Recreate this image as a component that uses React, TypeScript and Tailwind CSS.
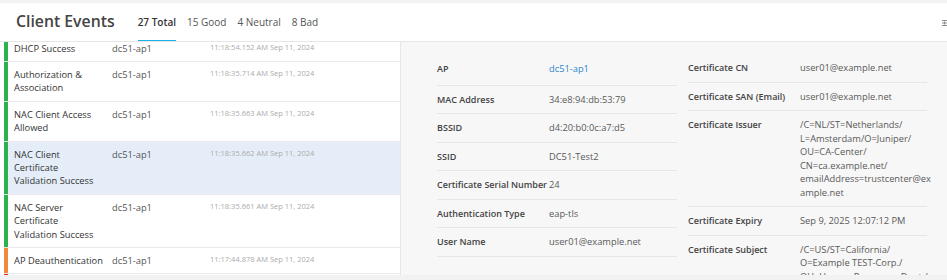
import React from "react";

type Ev = {
  name: string[];
  ap: string;
  time: string;
  color: string;
  selected?: boolean;
  first?: boolean;
};

const events: Ev[] = [
  { name: ["DHCP Success"], ap: "dc51-ap1", time: "11:18:54.152 AM Sep 11, 2024", color: "bg-[#2bb24c]", first: true },
  { name: ["Authorization &", "Association"], ap: "dc51-ap1", time: "11:18:35.714 AM Sep 11, 2024", color: "bg-[#2bb24c]" },
  { name: ["NAC Client Access", "Allowed"], ap: "dc51-ap1", time: "11:18:35.663 AM Sep 11, 2024", color: "bg-[#2bb24c]" },
  { name: ["NAC Client", "Certificate", "Validation Success"], ap: "dc51-ap1", time: "11:18:35.662 AM Sep 11, 2024", color: "bg-[#2bb24c]", selected: true },
  { name: ["NAC Server", "Certificate", "Validation Success"], ap: "dc51-ap1", time: "11:18:35.661 AM Sep 11, 2024", color: "bg-[#2bb24c]" },
  { name: ["AP Deauthentication"], ap: "dc51-ap1", time: "11:17:44.878 AM Sep 11, 2024", color: "bg-[#ef8a3c]" },
  { name: ["Deauthenticated"], ap: "dc51-ap1", time: "11:17:44.870 AM Sep 11, 2024", color: "bg-[#d62b32]" },
];

const leftDetails: { label: string; value: string[]; link?: boolean }[] = [
  { label: "AP", value: ["dc51-ap1"], link: true },
  { label: "MAC Address", value: ["34:e8:94:db:53:79"] },
  { label: "BSSID", value: ["d4:20:b0:0c:a7:d5"] },
  { label: "SSID", value: ["DC51-Test2"] },
  { label: "Certificate Serial Number", value: ["24"] },
  { label: "Authentication Type", value: ["eap-tls"] },
  { label: "User Name", value: ["user01@example.net"] },
];

const rightDetails: { label: string; value: string[] }[] = [
  { label: "Certificate CN", value: ["user01@example.net"] },
  { label: "Certificate SAN (Email)", value: ["user01@example.net"] },
  {
    label: "Certificate Issuer",
    value: [
      "/C=NL/ST=Netherlands/",
      "L=Amsterdam/O=Juniper/",
      "OU=CA-Center/",
      "CN=ca.example.net/",
      "emailAddress=trustcenter@ex",
      "ample.net",
    ],
  },
  { label: "Certificate Expiry", value: ["Sep 9, 2025 12:07:12 PM"] },
  {
    label: "Certificate Subject",
    value: ["/C=US/ST=California/", "O=Example TEST-Corp./", "OU=Human Resources Dept./", "CN=user01@example.net"],
  },
];

function EventRow({ ev }: { ev: Ev }) {
  return (
    <div className={`flex border-b border-[#e9e9e9] ${ev.selected ? "bg-[#e5eef8]" : "bg-white"}`}>
      <div className={`w-[4px] shrink-0 ${ev.color}`}></div>
      <div className={`flex pl-[6px] ${ev.first ? "pt-0 pb-[5.5px]" : "py-[6px]"}`}>
        <div className="w-[98px] shrink-0 text-[9.3px] leading-[13.4px] text-[#333]">
          {ev.name.map((l) => (
            <div key={l}>{l}</div>
          ))}
        </div>
        <div className="w-[98px] shrink-0 text-[9.3px] leading-[13.4px] text-[#555]">{ev.ap}</div>
        <div className="text-[7.5px] leading-[11px] text-[#ababab]">{ev.time}</div>
      </div>
    </div>
  );
}

function DetailRow({ label, value, link, extra }: { label: string; value: string[]; link?: boolean; extra?: string }) {
  return (
    <div className={`flex border-b border-[#e6e6e6] leading-[13.5px] ${extra ?? "py-[7px]"}`}>
      <div className="w-[112px] shrink-0 text-[9px] font-semibold text-[#444] whitespace-nowrap">{label}</div>
      <div className={`text-[9.3px] ${link ? "text-[#2f86cc]" : "text-[#595959]"}`}>
        {value.map((v) => (
          <div key={v} className="whitespace-nowrap">{v}</div>
        ))}
      </div>
    </div>
  );
}

export default function App() {
  return (
    <div className="w-[947px] h-[280px] overflow-hidden bg-[#f2f2f2] pt-[3px] font-['Open_Sans',sans-serif]">
      {/* HEADER */}
      <div className="flex h-[39px] items-center overflow-hidden bg-white border-b border-[#e6e6e6] pl-[16px]">
        <h1 className="text-[15.8px] font-semibold text-[#444] leading-none">Client Events</h1>
        <div className="ml-[23px] flex h-full items-center gap-[11px] text-[10px] text-[#555]">
          <div className="relative flex h-full items-center font-semibold text-[#333]">
            27 Total
            <div className="absolute left-0 right-0 bottom-[-1px] h-[2px] bg-[#1cb0e9]"></div>
          </div>
          <div>15 Good</div>
          <div>4 Neutral</div>
          <div>8 Bad</div>
        </div>
        <div className="ml-auto mr-[-4px] mt-[2px]">
          <svg width="9" height="8" viewBox="0 0 9 8" fill="none" stroke="#8a8a8a" strokeWidth="1">
            <path d="M0 1.5h9M0 4h9M0 6.5h9" />
            <path d="M2.5 2.5v3" />
          </svg>
        </div>
      </div>

      {/* BODY */}
      <div className="flex h-[233px] overflow-hidden">
        {/* EVENT LIST */}
        <div className="w-[401px] shrink-0 bg-white pl-[4px] border-r border-[#e6e6e6]">
          {events.map((ev) => (
            <EventRow key={ev.time} ev={ev} />
          ))}
        </div>

        {/* DETAILS */}
        <div className="flex flex-1 gap-[10px] bg-[#f7f7f7] pl-[32px] pt-[12px]">
          <div className="w-[244px] shrink-0">
            {leftDetails.map((d, i) => (
              <div key={d.label} className="pl-[4px]">
                <DetailRow label={d.label} value={d.value} link={d.link} extra={i === 0 ? "pt-[7.5px] pb-[9.5px]" : undefined} />
              </div>
            ))}
          </div>
          <div className="w-[240px] shrink-0">
            {rightDetails.map((d) => (
              <div key={d.label} className="pl-[1px]">
                <DetailRow label={d.label} value={d.value} />
              </div>
            ))}
          </div>
        </div>
      </div>
    </div>
  );
}
